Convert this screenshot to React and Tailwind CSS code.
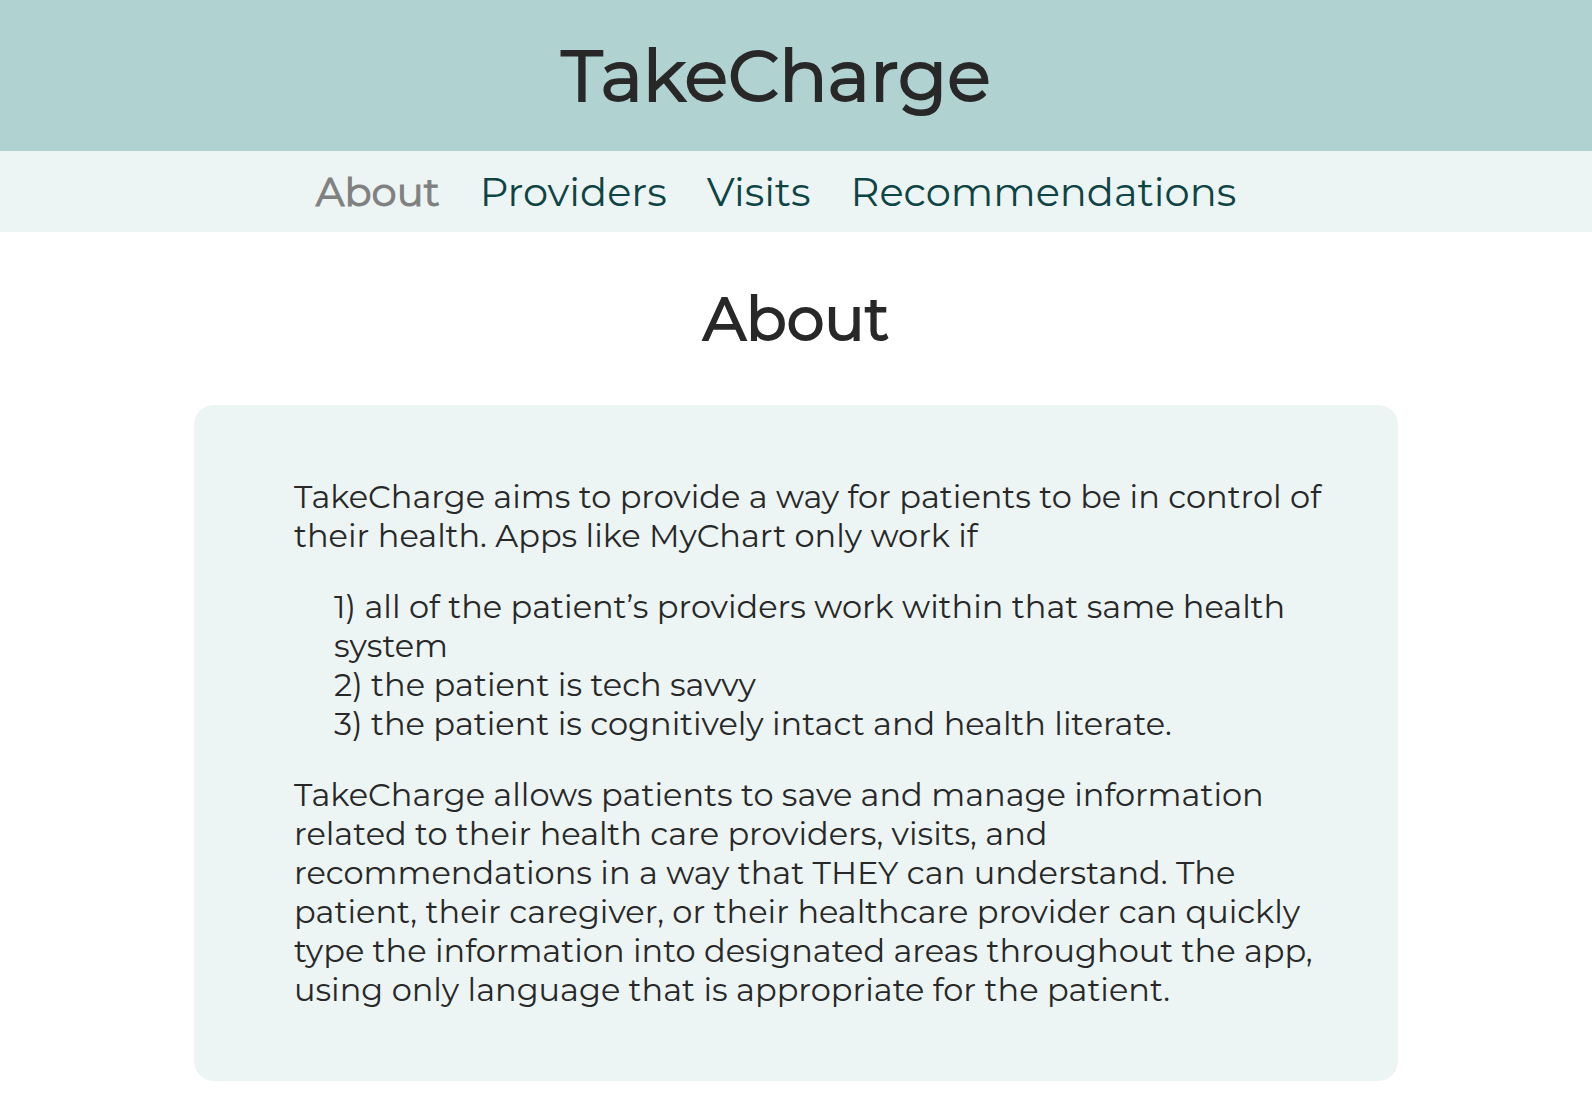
const links = ["About", "Providers", "Visits", "Recommendations"];

export default function App() {
  return (
    <div className="min-h-screen bg-white font-['Montserrat','Inter',sans-serif] text-[#282828]">
      <header className="bg-[#b0d2d0] py-[30px] pr-10 text-center">
        <h1 className="text-[72px] leading-[91px] font-normal [-webkit-text-stroke:2px_currentColor]">TakeCharge</h1>
      </header>
      <nav className="flex justify-center gap-10 bg-[#ecf5f4] py-4 pr-10 text-[40px] leading-[49px] font-normal text-[#0e4444]">
        {links.map((name, i) => (
          <a key={name} href="#" className={i === 0 ? "text-[#808080] [-webkit-text-stroke:1px_currentColor]" : ""}>
            {name}
          </a>
        ))}
      </nav>
      <main>
        <h2 className="py-12 text-center text-[60px] leading-[77px] font-normal [-webkit-text-stroke:2px_currentColor]">About</h2>
        <section className="mx-auto w-[calc(100%-388px)] rounded-[20px] bg-[#ecf5f4] py-[72px] pr-[60px] pl-[100px] text-[32px] leading-[39px] font-normal text-[#282828]">
          <p>TakeCharge aims to provide a way for patients to be in control of their health. Apps like MyChart only work if</p>
          <div className="my-8 pl-10">
            <p>1) all of the patient’s providers work within that same health system</p>
            <p>2) the patient is tech savvy</p>
            <p>3) the patient is cognitively intact and health literate.</p>
          </div>
          <p>TakeCharge allows patients to save and manage information related to their health care providers, visits, and recommendations in a way that THEY can understand. The patient, their caregiver, or their healthcare provider can quickly type the information into designated areas throughout the app, using only language that is appropriate for the patient.</p>
        </section>
      </main>
    </div>
  );
}
